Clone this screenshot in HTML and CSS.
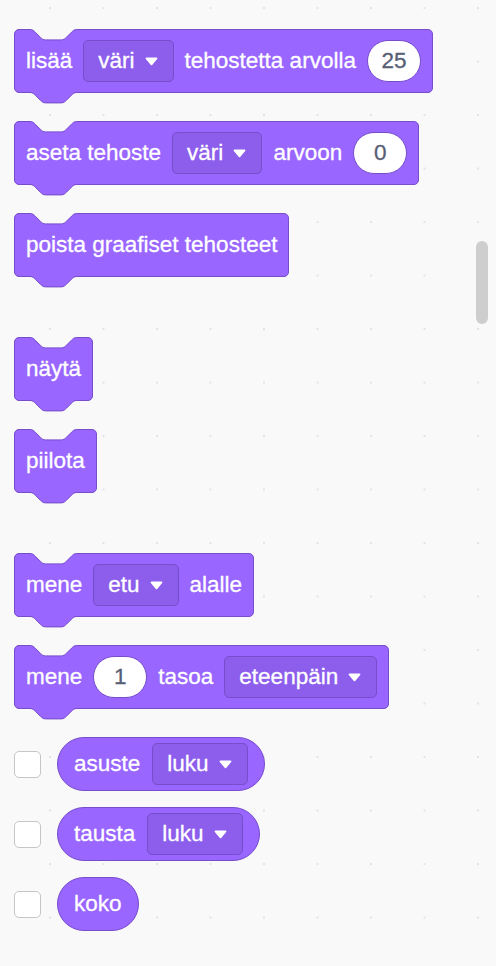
FILE: index.html
```html
<!DOCTYPE html>
<html lang="fi">
<head>
<meta charset="utf-8">
<title>Ulkonäkö</title>
<link rel="stylesheet" href="styles.css">
</head>
<body>
<div class="workspace">
  <div class="palette">
    <div class="group">
      <div class="block">
        <svg class="notch" width="47" height="12" viewBox="0 0 47 12"><path class="notch-fill" d="M0,0 L0,0.5 C2.6,0.5 3.9,1.8 5.2,3.1 L10.4,8.3 C11.7,9.6 13,10.9 15.6,10.9 H31.2 C33.8,10.9 35.1,9.6 36.4,8.3 L41.6,3.1 C42.9,1.8 44.2,0.5 46.8,0.5 L46.8,0 Z"/><path class="edge" d="M0,0.5 C2.6,0.5 3.9,1.8 5.2,3.1 L10.4,8.3 C11.7,9.6 13,10.9 15.6,10.9 H31.2 C33.8,10.9 35.1,9.6 36.4,8.3 L41.6,3.1 C42.9,1.8 44.2,0.5 46.8,0.5"/></svg>
        <span class="label">lisää</span>
        <span class="dropdown"><span>väri</span><svg class="arrow" width="13" height="9" viewBox="0 0 13 9"><path d="M1.5,1.5 H11.5 L6.5,7.3 Z"/></svg></span>
        <span class="label">tehostetta arvolla</span>
        <span class="num">25</span>
        <svg class="tab" width="47" height="12" viewBox="0 0 47 12"><path class="tab-fill" d="M0,0 L0,0.5 C2.6,0.5 3.9,1.8 5.2,3.1 L10.4,8.3 C11.7,9.6 13,10.9 15.6,10.9 H31.2 C33.8,10.9 35.1,9.6 36.4,8.3 L41.6,3.1 C42.9,1.8 44.2,0.5 46.8,0.5 L46.8,0 Z"/><path class="edge" d="M0,0.5 C2.6,0.5 3.9,1.8 5.2,3.1 L10.4,8.3 C11.7,9.6 13,10.9 15.6,10.9 H31.2 C33.8,10.9 35.1,9.6 36.4,8.3 L41.6,3.1 C42.9,1.8 44.2,0.5 46.8,0.5"/></svg>
      </div>
      <div class="block">
        <svg class="notch" width="47" height="12" viewBox="0 0 47 12"><path class="notch-fill" d="M0,0 L0,0.5 C2.6,0.5 3.9,1.8 5.2,3.1 L10.4,8.3 C11.7,9.6 13,10.9 15.6,10.9 H31.2 C33.8,10.9 35.1,9.6 36.4,8.3 L41.6,3.1 C42.9,1.8 44.2,0.5 46.8,0.5 L46.8,0 Z"/><path class="edge" d="M0,0.5 C2.6,0.5 3.9,1.8 5.2,3.1 L10.4,8.3 C11.7,9.6 13,10.9 15.6,10.9 H31.2 C33.8,10.9 35.1,9.6 36.4,8.3 L41.6,3.1 C42.9,1.8 44.2,0.5 46.8,0.5"/></svg>
        <span class="label">aseta tehoste</span>
        <span class="dropdown"><span>väri</span><svg class="arrow" width="13" height="9" viewBox="0 0 13 9"><path d="M1.5,1.5 H11.5 L6.5,7.3 Z"/></svg></span>
        <span class="label">arvoon</span>
        <span class="num">0</span>
        <svg class="tab" width="47" height="12" viewBox="0 0 47 12"><path class="tab-fill" d="M0,0 L0,0.5 C2.6,0.5 3.9,1.8 5.2,3.1 L10.4,8.3 C11.7,9.6 13,10.9 15.6,10.9 H31.2 C33.8,10.9 35.1,9.6 36.4,8.3 L41.6,3.1 C42.9,1.8 44.2,0.5 46.8,0.5 L46.8,0 Z"/><path class="edge" d="M0,0.5 C2.6,0.5 3.9,1.8 5.2,3.1 L10.4,8.3 C11.7,9.6 13,10.9 15.6,10.9 H31.2 C33.8,10.9 35.1,9.6 36.4,8.3 L41.6,3.1 C42.9,1.8 44.2,0.5 46.8,0.5"/></svg>
      </div>
      <div class="block">
        <svg class="notch" width="47" height="12" viewBox="0 0 47 12"><path class="notch-fill" d="M0,0 L0,0.5 C2.6,0.5 3.9,1.8 5.2,3.1 L10.4,8.3 C11.7,9.6 13,10.9 15.6,10.9 H31.2 C33.8,10.9 35.1,9.6 36.4,8.3 L41.6,3.1 C42.9,1.8 44.2,0.5 46.8,0.5 L46.8,0 Z"/><path class="edge" d="M0,0.5 C2.6,0.5 3.9,1.8 5.2,3.1 L10.4,8.3 C11.7,9.6 13,10.9 15.6,10.9 H31.2 C33.8,10.9 35.1,9.6 36.4,8.3 L41.6,3.1 C42.9,1.8 44.2,0.5 46.8,0.5"/></svg>
        <span class="label">poista graafiset tehosteet</span>
        <svg class="tab" width="47" height="12" viewBox="0 0 47 12"><path class="tab-fill" d="M0,0 L0,0.5 C2.6,0.5 3.9,1.8 5.2,3.1 L10.4,8.3 C11.7,9.6 13,10.9 15.6,10.9 H31.2 C33.8,10.9 35.1,9.6 36.4,8.3 L41.6,3.1 C42.9,1.8 44.2,0.5 46.8,0.5 L46.8,0 Z"/><path class="edge" d="M0,0.5 C2.6,0.5 3.9,1.8 5.2,3.1 L10.4,8.3 C11.7,9.6 13,10.9 15.6,10.9 H31.2 C33.8,10.9 35.1,9.6 36.4,8.3 L41.6,3.1 C42.9,1.8 44.2,0.5 46.8,0.5"/></svg>
      </div>
    </div>

    <div class="group">
      <div class="block">
        <svg class="notch" width="47" height="12" viewBox="0 0 47 12"><path class="notch-fill" d="M0,0 L0,0.5 C2.6,0.5 3.9,1.8 5.2,3.1 L10.4,8.3 C11.7,9.6 13,10.9 15.6,10.9 H31.2 C33.8,10.9 35.1,9.6 36.4,8.3 L41.6,3.1 C42.9,1.8 44.2,0.5 46.8,0.5 L46.8,0 Z"/><path class="edge" d="M0,0.5 C2.6,0.5 3.9,1.8 5.2,3.1 L10.4,8.3 C11.7,9.6 13,10.9 15.6,10.9 H31.2 C33.8,10.9 35.1,9.6 36.4,8.3 L41.6,3.1 C42.9,1.8 44.2,0.5 46.8,0.5"/></svg>
        <span class="label">näytä</span>
        <svg class="tab" width="47" height="12" viewBox="0 0 47 12"><path class="tab-fill" d="M0,0 L0,0.5 C2.6,0.5 3.9,1.8 5.2,3.1 L10.4,8.3 C11.7,9.6 13,10.9 15.6,10.9 H31.2 C33.8,10.9 35.1,9.6 36.4,8.3 L41.6,3.1 C42.9,1.8 44.2,0.5 46.8,0.5 L46.8,0 Z"/><path class="edge" d="M0,0.5 C2.6,0.5 3.9,1.8 5.2,3.1 L10.4,8.3 C11.7,9.6 13,10.9 15.6,10.9 H31.2 C33.8,10.9 35.1,9.6 36.4,8.3 L41.6,3.1 C42.9,1.8 44.2,0.5 46.8,0.5"/></svg>
      </div>
      <div class="block">
        <svg class="notch" width="47" height="12" viewBox="0 0 47 12"><path class="notch-fill" d="M0,0 L0,0.5 C2.6,0.5 3.9,1.8 5.2,3.1 L10.4,8.3 C11.7,9.6 13,10.9 15.6,10.9 H31.2 C33.8,10.9 35.1,9.6 36.4,8.3 L41.6,3.1 C42.9,1.8 44.2,0.5 46.8,0.5 L46.8,0 Z"/><path class="edge" d="M0,0.5 C2.6,0.5 3.9,1.8 5.2,3.1 L10.4,8.3 C11.7,9.6 13,10.9 15.6,10.9 H31.2 C33.8,10.9 35.1,9.6 36.4,8.3 L41.6,3.1 C42.9,1.8 44.2,0.5 46.8,0.5"/></svg>
        <span class="label">piilota</span>
        <svg class="tab" width="47" height="12" viewBox="0 0 47 12"><path class="tab-fill" d="M0,0 L0,0.5 C2.6,0.5 3.9,1.8 5.2,3.1 L10.4,8.3 C11.7,9.6 13,10.9 15.6,10.9 H31.2 C33.8,10.9 35.1,9.6 36.4,8.3 L41.6,3.1 C42.9,1.8 44.2,0.5 46.8,0.5 L46.8,0 Z"/><path class="edge" d="M0,0.5 C2.6,0.5 3.9,1.8 5.2,3.1 L10.4,8.3 C11.7,9.6 13,10.9 15.6,10.9 H31.2 C33.8,10.9 35.1,9.6 36.4,8.3 L41.6,3.1 C42.9,1.8 44.2,0.5 46.8,0.5"/></svg>
      </div>
    </div>

    <div class="group">
      <div class="block">
        <svg class="notch" width="47" height="12" viewBox="0 0 47 12"><path class="notch-fill" d="M0,0 L0,0.5 C2.6,0.5 3.9,1.8 5.2,3.1 L10.4,8.3 C11.7,9.6 13,10.9 15.6,10.9 H31.2 C33.8,10.9 35.1,9.6 36.4,8.3 L41.6,3.1 C42.9,1.8 44.2,0.5 46.8,0.5 L46.8,0 Z"/><path class="edge" d="M0,0.5 C2.6,0.5 3.9,1.8 5.2,3.1 L10.4,8.3 C11.7,9.6 13,10.9 15.6,10.9 H31.2 C33.8,10.9 35.1,9.6 36.4,8.3 L41.6,3.1 C42.9,1.8 44.2,0.5 46.8,0.5"/></svg>
        <span class="label">mene</span>
        <span class="dropdown"><span>etu</span><svg class="arrow" width="13" height="9" viewBox="0 0 13 9"><path d="M1.5,1.5 H11.5 L6.5,7.3 Z"/></svg></span>
        <span class="label">alalle</span>
        <svg class="tab" width="47" height="12" viewBox="0 0 47 12"><path class="tab-fill" d="M0,0 L0,0.5 C2.6,0.5 3.9,1.8 5.2,3.1 L10.4,8.3 C11.7,9.6 13,10.9 15.6,10.9 H31.2 C33.8,10.9 35.1,9.6 36.4,8.3 L41.6,3.1 C42.9,1.8 44.2,0.5 46.8,0.5 L46.8,0 Z"/><path class="edge" d="M0,0.5 C2.6,0.5 3.9,1.8 5.2,3.1 L10.4,8.3 C11.7,9.6 13,10.9 15.6,10.9 H31.2 C33.8,10.9 35.1,9.6 36.4,8.3 L41.6,3.1 C42.9,1.8 44.2,0.5 46.8,0.5"/></svg>
      </div>
      <div class="block">
        <svg class="notch" width="47" height="12" viewBox="0 0 47 12"><path class="notch-fill" d="M0,0 L0,0.5 C2.6,0.5 3.9,1.8 5.2,3.1 L10.4,8.3 C11.7,9.6 13,10.9 15.6,10.9 H31.2 C33.8,10.9 35.1,9.6 36.4,8.3 L41.6,3.1 C42.9,1.8 44.2,0.5 46.8,0.5 L46.8,0 Z"/><path class="edge" d="M0,0.5 C2.6,0.5 3.9,1.8 5.2,3.1 L10.4,8.3 C11.7,9.6 13,10.9 15.6,10.9 H31.2 C33.8,10.9 35.1,9.6 36.4,8.3 L41.6,3.1 C42.9,1.8 44.2,0.5 46.8,0.5"/></svg>
        <span class="label">mene</span>
        <span class="num">1</span>
        <span class="label">tasoa</span>
        <span class="dropdown"><span>eteenpäin</span><svg class="arrow" width="13" height="9" viewBox="0 0 13 9"><path d="M1.5,1.5 H11.5 L6.5,7.3 Z"/></svg></span>
        <svg class="tab" width="47" height="12" viewBox="0 0 47 12"><path class="tab-fill" d="M0,0 L0,0.5 C2.6,0.5 3.9,1.8 5.2,3.1 L10.4,8.3 C11.7,9.6 13,10.9 15.6,10.9 H31.2 C33.8,10.9 35.1,9.6 36.4,8.3 L41.6,3.1 C42.9,1.8 44.2,0.5 46.8,0.5 L46.8,0 Z"/><path class="edge" d="M0,0.5 C2.6,0.5 3.9,1.8 5.2,3.1 L10.4,8.3 C11.7,9.6 13,10.9 15.6,10.9 H31.2 C33.8,10.9 35.1,9.6 36.4,8.3 L41.6,3.1 C42.9,1.8 44.2,0.5 46.8,0.5"/></svg>
      </div>

      <div class="reporters">
        <div class="rrow">
          <span class="check"></span>
          <div class="reporter">
            <span class="label">asuste</span>
            <span class="dropdown"><span>luku</span><svg class="arrow" width="13" height="9" viewBox="0 0 13 9"><path d="M1.5,1.5 H11.5 L6.5,7.3 Z"/></svg></span>
          </div>
        </div>
        <div class="rrow">
          <span class="check"></span>
          <div class="reporter">
            <span class="label">tausta</span>
            <span class="dropdown"><span>luku</span><svg class="arrow" width="13" height="9" viewBox="0 0 13 9"><path d="M1.5,1.5 H11.5 L6.5,7.3 Z"/></svg></span>
          </div>
        </div>
        <div class="rrow">
          <span class="check"></span>
          <div class="reporter">
            <span class="label">koko</span>
          </div>
        </div>
      </div>
    </div>
  </div>
  <div class="scrollbar"></div>
</div>
</body>
</html>
```

FILE: styles.css
```css
html, body {
  margin: 0;
  padding: 0;
}

body {
  width: 496px;
  height: 966px;
  overflow: hidden;
  background-color: #F9F9F9;
  background-image: radial-gradient(circle at 1px 1px, #E4E4E4 0.9px, rgba(228,228,228,0) 1.6px);
  background-size: 53.5px 53.5px;
  background-position: 49px 7px;
  font-family: "Liberation Sans", Arial, Helvetica, sans-serif;
  font-size: 22.5px;
  color: #FFFFFF;
  -webkit-text-stroke: 0.3px currentColor;
}

.workspace {
  position: relative;
  width: 496px;
  height: 966px;
}

.palette {
  display: flex;
  flex-direction: column;
  align-items: flex-start;
  gap: 60px;
  padding: 29px 0 0 14px;
}

.group {
  display: flex;
  flex-direction: column;
  align-items: flex-start;
  gap: 28px;
}

.block {
  position: relative;
  display: flex;
  align-items: center;
  gap: 11px;
  box-sizing: border-box;
  height: 64px;
  padding: 0 11px;
  background: #9966FF;
  border: 1px solid #774DCB;
  border-radius: 5px;
  white-space: nowrap;
}

.notch {
  position: absolute;
  top: -1px;
  left: 15px;
  overflow: visible;
}

.notch-fill {
  fill: #F9F9F9;
}

.tab {
  position: absolute;
  top: 100%;
  left: 15px;
  overflow: visible;
}

.tab-fill {
  fill: #9966FF;
}

.edge {
  fill: none;
  stroke: #774DCB;
  stroke-width: 1;
}

.label {
  line-height: 1;
}

.dropdown {
  display: flex;
  align-items: center;
  gap: 10px;
  box-sizing: border-box;
  height: 42px;
  padding: 0 15px 0 14px;
  background: #8D5EEC;
  border: 1px solid #774DCB;
  border-radius: 5px;
  line-height: 1;
}

.arrow {
  display: block;
}

.arrow path {
  fill: #FFFFFF;
  stroke: #FFFFFF;
  stroke-width: 1.8;
  stroke-linejoin: round;
}

.num {
  display: flex;
  align-items: center;
  justify-content: center;
  box-sizing: border-box;
  min-width: 54px;
  height: 42px;
  padding: 0 12px;
  background: #FFFFFF;
  border: 1px solid #774DCB;
  border-radius: 21px;
  color: #575E75;
  line-height: 1;
}

.reporters {
  display: flex;
  flex-direction: column;
  align-items: flex-start;
  gap: 16px;
}

.rrow {
  display: flex;
  align-items: center;
  gap: 16px;
}

.check {
  display: block;
  box-sizing: border-box;
  width: 27px;
  height: 27px;
  background: #FFFFFF;
  border: 1px solid #C6C6C6;
  border-radius: 5px;
}

.reporter {
  display: flex;
  align-items: center;
  gap: 12px;
  box-sizing: border-box;
  height: 54px;
  padding: 0 16px;
  background: #9966FF;
  border: 1px solid #774DCB;
  border-radius: 27px;
  white-space: nowrap;
}

.scrollbar {
  position: absolute;
  top: 241px;
  left: 476px;
  width: 12px;
  height: 83px;
  border-radius: 6px;
  background: #CECECE;
}
```
